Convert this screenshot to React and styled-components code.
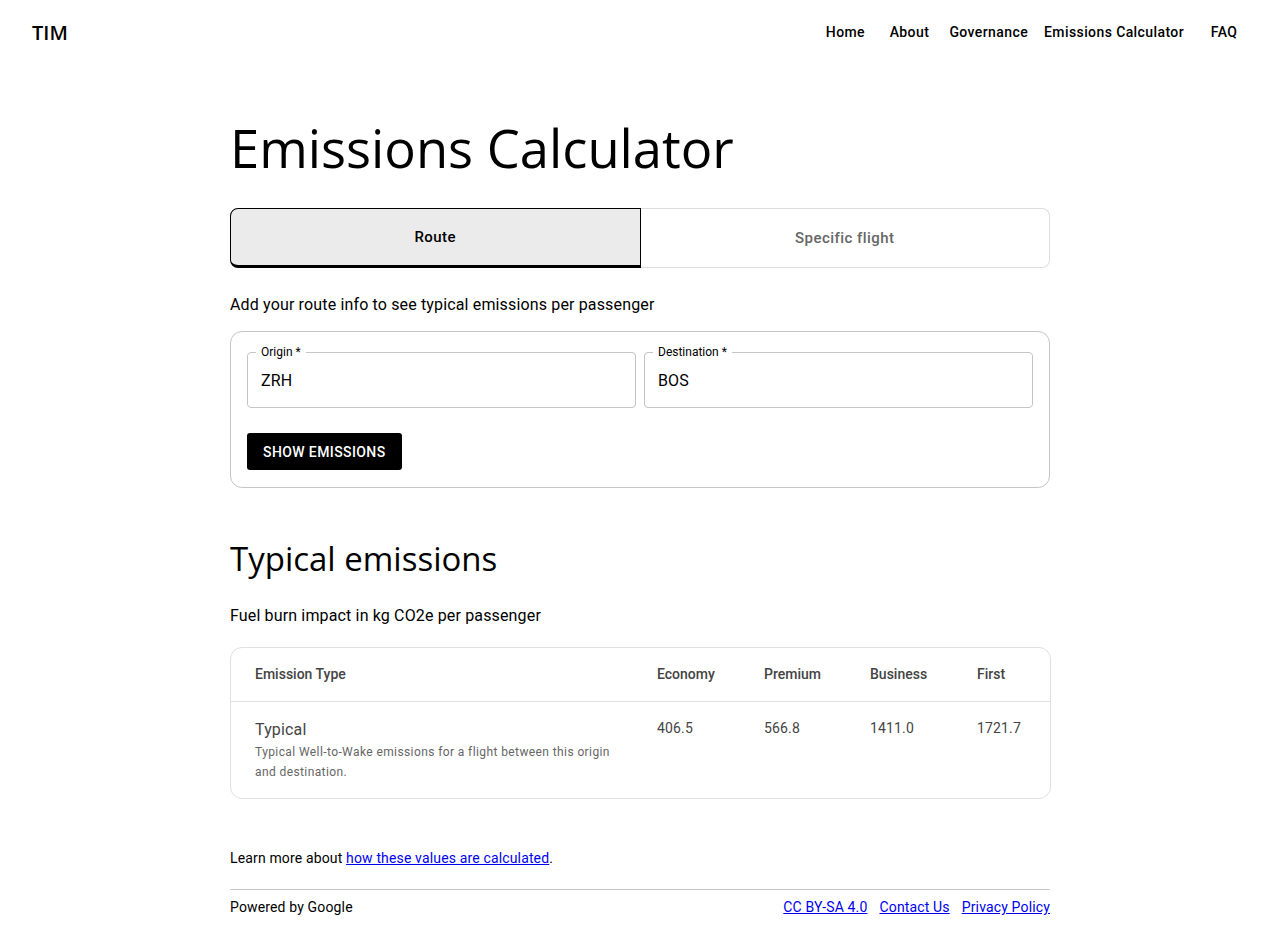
import styled, {createGlobalStyle} from 'styled-components';

const GlobalStyle = createGlobalStyle`
  * {
    box-sizing: border-box;
  }

  body {
    margin: 0;
    background: #fff;
    color: #000;
    font-family: Roboto, 'Liberation Sans', sans-serif;
  }
`;

const navItems = ['Home', 'About', 'Governance', 'Emissions Calculator', 'FAQ'];

const columns = ['Economy', 'Premium', 'Business', 'First'];
const values = ['406.5', '566.8', '1411.0', '1721.7'];

const App = () => {
  return (
    <>
      <GlobalStyle />
      <Header>
        <Logo>TIM</Logo>
        <Nav>
          {navItems.map((item) => (
            <NavButton key={item}>{item}</NavButton>
          ))}
        </Nav>
      </Header>

      <Main>
        <Title>Emissions Calculator</Title>

        <Tabs>
          <Tab $active>Route</Tab>
          <Tab>Specific flight</Tab>
        </Tabs>

        <Lead>Add your route info to see typical emissions per passenger</Lead>

        <FormCard>
          <Fields>
            <Field>
              <FieldLabel>Origin *</FieldLabel>
              <FieldValue>ZRH</FieldValue>
            </Field>
            <Field>
              <FieldLabel>Destination *</FieldLabel>
              <FieldValue>BOS</FieldValue>
            </Field>
          </Fields>
          <SubmitButton>Show emissions</SubmitButton>
        </FormCard>

        <SectionTitle>Typical emissions</SectionTitle>
        <Lead>Fuel burn impact in kg CO2e per passenger</Lead>

        <Table>
          <HeadRow>
            <HeadCell>Emission Type</HeadCell>
            {columns.map((c) => (
              <HeadCell key={c}>{c}</HeadCell>
            ))}
          </HeadRow>
          <BodyRow>
            <Cell $first>
              <TypeName>Typical</TypeName>
              <TypeDesc>
                Typical Well-to-Wake emissions for a flight between this origin and destination.
              </TypeDesc>
            </Cell>
            {values.map((v) => (
              <Cell key={v}>{v}</Cell>
            ))}
          </BodyRow>
        </Table>

        <LearnMore>
          Learn more about <a href='#'>how these values are calculated</a>.
        </LearnMore>

        <Footer>
          <span>Powered by Google</span>
          <FooterLinks>
            <a href='#'>CC BY-SA 4.0</a>
            <a href='#'>Contact Us</a>
            <a href='#'>Privacy Policy</a>
          </FooterLinks>
        </Footer>
      </Main>
    </>
  );
};

export default App;

const Header = styled.header`
  display: flex;
  align-items: center;
  justify-content: space-between;
  height: 64px;
  padding: 0 24px 0 32px;
`;

const Logo = styled.div`
  font-family: 'Open Sans', sans-serif;
  font-size: 20px;
  font-weight: 600;
`;

const Nav = styled.nav`
  display: flex;
`;

const NavButton = styled.button`
  min-width: 64px;
  padding: 6px 8px;
  border: none;
  background: none;
  font-family: Roboto, sans-serif;
  font-size: 14px;
  font-weight: 500;
  line-height: 24px;
  letter-spacing: 0.02857em;
  color: #000;
  cursor: pointer;
`;

const Main = styled.main`
  width: 820px;
  margin: 0 auto;
  padding: 54px 0 30px;
`;

const Title = styled.h1`
  margin: 0 0 30px;
  font-family: 'Open Sans', sans-serif;
  font-size: 52.5px;
  font-weight: 400;
  line-height: 60px;
`;

const Tabs = styled.div`
  display: flex;
  height: 60px;
`;

const Tab = styled.button`
  flex: 1;
  padding: 0;
  font-family: Roboto, sans-serif;
  font-size: 15px;
  font-weight: 500;
  letter-spacing: 0.03em;
  cursor: pointer;
  background: ${(p) => (p.$active ? '#ebebeb' : '#fff')};
  color: ${(p) => (p.$active ? '#000' : '#666')};
  border: 1px solid ${(p) => (p.$active ? '#000' : '#ddd')};
  border-bottom-width: ${(p) => (p.$active ? '3px' : '1px')};
  border-left-width: ${(p) => (p.$active ? '1px' : '0')};
  border-radius: ${(p) => (p.$active ? '8px 0 0 8px' : '0 8px 8px 0')};
`;

const Lead = styled.p`
  margin: 25px 0 14px;
  font-size: 16px;
  line-height: 24px;
  letter-spacing: 0.00938em;
`;

const FormCard = styled.div`
  display: flex;
  flex-direction: column;
  align-items: flex-start;
  gap: 25px;
  padding: 20px 16px 17px;
  border: 1px solid #c4c4c4;
  border-radius: 12px;
`;

const Fields = styled.div`
  display: flex;
  gap: 8px;
  width: 100%;
`;

const Field = styled.div`
  position: relative;
  flex: 1;
  display: flex;
  align-items: center;
  height: 56px;
  padding: 0 14px;
  border: 1px solid #c4c4c4;
  border-radius: 4px;
`;

const FieldLabel = styled.span`
  position: absolute;
  top: -8px;
  left: 8px;
  padding: 0 5px;
  background: #fff;
  font-size: 12px;
  line-height: 14px;
  color: #000;
`;

const FieldValue = styled.span`
  margin-left: -1px;
  font-size: 16px;
  letter-spacing: 0.00938em;
`;

const SubmitButton = styled.button`
  height: 37px;
  padding: 0 16px;
  border: none;
  border-radius: 3px;
  background: #000;
  color: #fff;
  font-family: Roboto, sans-serif;
  font-size: 14px;
  font-weight: 500;
  letter-spacing: 0.02857em;
  text-transform: uppercase;
  cursor: pointer;
`;

const SectionTitle = styled.h2`
  margin: 50px 0 0;
  font-family: 'Open Sans', sans-serif;
  font-size: 33px;
  font-weight: 400;
  line-height: 41px;
`;

const Table = styled.div`
  width: calc(100% + 1px);
  margin-top: 19px;
  border: 1px solid #e0e0e0;
  border-radius: 12px;
`;

const gridCols = '402px 107px 106px 107px 1fr';

const HeadRow = styled.div`
  display: grid;
  grid-template-columns: ${gridCols};
  border-bottom: 1px solid #e0e0e0;
`;

const HeadCell = styled.div`
  padding: 15px 24px 16px;
  font-size: 14px;
  font-weight: 500;
  line-height: 22px;
  color: #444;
  white-space: nowrap;
`;

const BodyRow = styled.div`
  display: grid;
  grid-template-columns: ${gridCols};
`;

const Cell = styled.div`
  padding: ${(p) => (p.$first ? '16px 12px 16px 24px' : '16px 24px')};
  font-size: 14px;
  line-height: 20px;
  color: #444;
  letter-spacing: 0.01071em;
`;

const TypeName = styled.div`
  font-size: 16px;
  line-height: 24px;
  color: #444;
`;

const TypeDesc = styled.div`
  font-size: 12px;
  line-height: 20px;
  letter-spacing: 0.03333em;
  color: #666;
`;

const LearnMore = styled.p`
  margin: 49px 0 21px;
  font-size: 14px;
  line-height: 20px;
  letter-spacing: 0.01071em;

  a {
    color: #0000ee;
  }
`;

const Footer = styled.footer`
  display: flex;
  justify-content: space-between;
  padding-top: 7px;
  border-top: 1px solid #c4c4c4;
  font-size: 14px;
  line-height: 20px;
  letter-spacing: 0.01071em;
`;

const FooterLinks = styled.div`
  display: flex;
  gap: 12px;

  a {
    color: #0000ee;
  }
`;
